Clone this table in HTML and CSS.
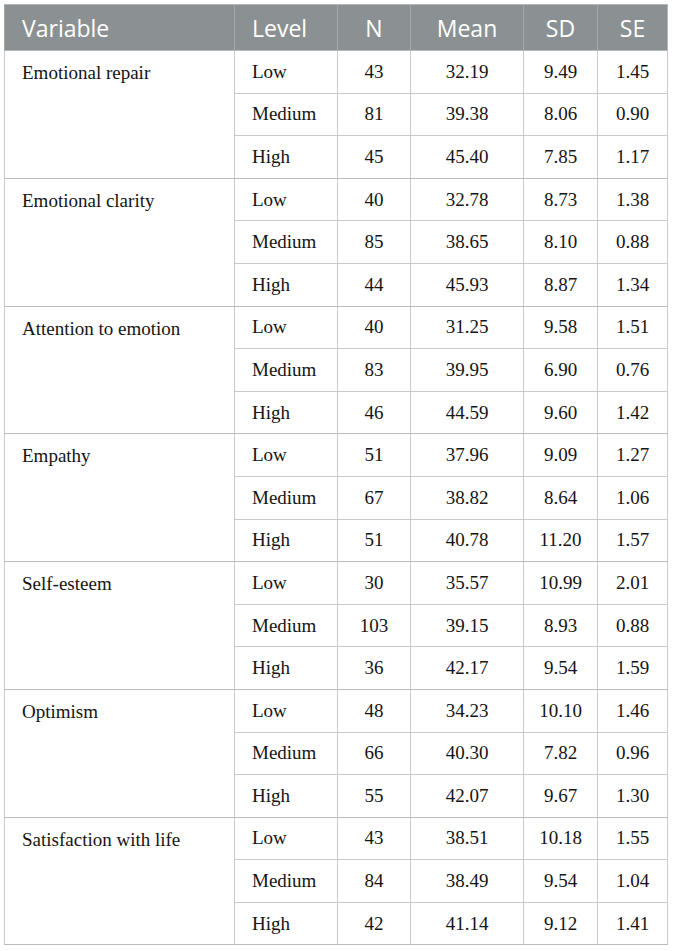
FILE: index.html
```html
<!DOCTYPE html>
<html lang="en">
<head>
    <meta charset="UTF-8">
    <title>Descriptive statistics by level</title>
    <link rel="stylesheet" href="styles.css">
</head>
<body>
    <table class="stats">
        <colgroup>
            <col class="col-var">
            <col class="col-level">
            <col class="col-n">
            <col class="col-mean">
            <col class="col-sd">
            <col class="col-se">
        </colgroup>
        <thead>
            <tr>
                <th class="left">Variable</th>
                <th class="left">Level</th>
                <th>N</th>
                <th>Mean</th>
                <th>SD</th>
                <th>SE</th>
            </tr>
        </thead>
        <tbody>
            <tr><td class="var" rowspan="3">Emotional repair</td><td class="level">Low</td><td>43</td><td>32.19</td><td>9.49</td><td>1.45</td></tr>
            <tr><td class="level">Medium</td><td>81</td><td>39.38</td><td>8.06</td><td>0.90</td></tr>
            <tr class="last"><td class="level">High</td><td>45</td><td>45.40</td><td>7.85</td><td>1.17</td></tr>

            <tr><td class="var" rowspan="3">Emotional clarity</td><td class="level">Low</td><td>40</td><td>32.78</td><td>8.73</td><td>1.38</td></tr>
            <tr><td class="level">Medium</td><td>85</td><td>38.65</td><td>8.10</td><td>0.88</td></tr>
            <tr class="last"><td class="level">High</td><td>44</td><td>45.93</td><td>8.87</td><td>1.34</td></tr>

            <tr><td class="var" rowspan="3">Attention to emotion</td><td class="level">Low</td><td>40</td><td>31.25</td><td>9.58</td><td>1.51</td></tr>
            <tr><td class="level">Medium</td><td>83</td><td>39.95</td><td>6.90</td><td>0.76</td></tr>
            <tr class="last"><td class="level">High</td><td>46</td><td>44.59</td><td>9.60</td><td>1.42</td></tr>

            <tr><td class="var" rowspan="3">Empathy</td><td class="level">Low</td><td>51</td><td>37.96</td><td>9.09</td><td>1.27</td></tr>
            <tr><td class="level">Medium</td><td>67</td><td>38.82</td><td>8.64</td><td>1.06</td></tr>
            <tr class="last"><td class="level">High</td><td>51</td><td>40.78</td><td>11.20</td><td>1.57</td></tr>

            <tr><td class="var" rowspan="3">Self-esteem</td><td class="level">Low</td><td>30</td><td>35.57</td><td>10.99</td><td>2.01</td></tr>
            <tr><td class="level">Medium</td><td>103</td><td>39.15</td><td>8.93</td><td>0.88</td></tr>
            <tr class="last"><td class="level">High</td><td>36</td><td>42.17</td><td>9.54</td><td>1.59</td></tr>

            <tr><td class="var" rowspan="3">Optimism</td><td class="level">Low</td><td>48</td><td>34.23</td><td>10.10</td><td>1.46</td></tr>
            <tr><td class="level">Medium</td><td>66</td><td>40.30</td><td>7.82</td><td>0.96</td></tr>
            <tr class="last"><td class="level">High</td><td>55</td><td>42.07</td><td>9.67</td><td>1.30</td></tr>

            <tr><td class="var" rowspan="3">Satisfaction with life</td><td class="level">Low</td><td>43</td><td>38.51</td><td>10.18</td><td>1.55</td></tr>
            <tr><td class="level">Medium</td><td>84</td><td>38.49</td><td>9.54</td><td>1.04</td></tr>
            <tr class="last"><td class="level">High</td><td>42</td><td>41.14</td><td>9.12</td><td>1.41</td></tr>
        </tbody>
    </table>
</body>
</html>
```

FILE: styles.css
```css
body {
    margin: 4px;
    background-color: #ffffff;
    font-family: 'Liberation Serif', 'Times New Roman', serif;
    color: #141414;
}

/* Table */
.stats {
    border-collapse: collapse;
    width: 663px;
    table-layout: fixed;
    border: 1px solid #b4b8b8;
}

.col-var   { width: 230px; }
.col-level { width: 103px; }
.col-n     { width: 73px; }
.col-mean  { width: 113px; }
.col-sd    { width: 74px; }
.col-se    { width: 70px; }

/* Header row */
.stats th {
    background-color: #8b9192;
    color: #ffffff;
    font-family: 'Open Sans', 'Noto Sans', sans-serif;
    font-weight: normal;
    font-size: 23px;
    height: 45px;
    padding: 0;
    text-align: center;
    border-left: 1px solid #a3a8a9;
    border-bottom: 1px solid #b4b8b8;
}

.stats th.left {
    text-align: left;
    padding-left: 17px;
}

/* Body cells */
.stats td {
    font-size: 19px;
    height: 41.6px;
    padding: 0;
    text-align: center;
    vertical-align: middle;
    border: 1px solid #c9c9c9;
}

.stats td.level {
    text-align: left;
    padding-left: 17px;
}

.stats td.var {
    text-align: left;
    vertical-align: top;
    padding: 11px 0 0 17px;
    border-bottom: 1px solid #b9bcbc;
}

.stats tr.last td {
    border-bottom: 1px solid #b9bcbc;
}
```
